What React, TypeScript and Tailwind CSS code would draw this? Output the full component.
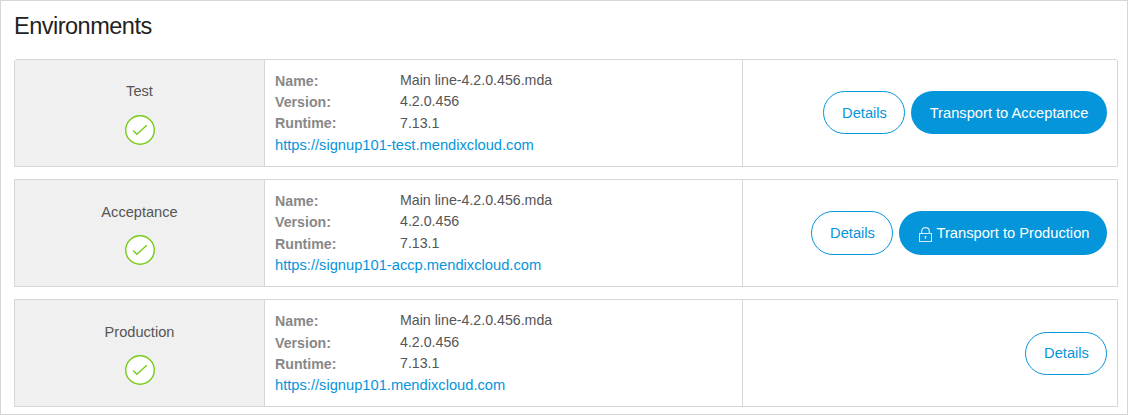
type Env = {
  name: string;
  url: string;
  labelClass: string;
  versionClass: string;
  versionValueClass: string;
  runtimeClass: string;
  actionsClass: string;
  buttonClass: string;
  cornerClass: string;
  transport?: string;
  transportClass?: string;
  locked?: boolean;
};

const environments: Env[] = [
  {
    name: 'Test',
    url: 'https://signup101-test.mendixcloud.com',
    labelClass: 'pt-[21px]',
    versionClass: '',
    versionValueClass: '-mt-px',
    runtimeClass: '',
    actionsClass: 'pt-[31px]',
    buttonClass: 'h-[43px] pt-0.5',
    cornerClass: 'rounded-t-[3px]',
    transport: 'Transport to Acceptance',
    transportClass: 'w-[196px]',
  },
  {
    name: 'Acceptance',
    url: 'https://signup101-accp.mendixcloud.com',
    labelClass: 'pt-[22px]',
    versionClass: '',
    versionValueClass: '-mt-px',
    runtimeClass: 'pt-px',
    actionsClass: 'pt-[31px]',
    buttonClass: 'h-[44px] pt-px',
    cornerClass: '',
    transport: 'Transport to Production',
    transportClass: 'w-[208px] pl-0.5',
    locked: true,
  },
  {
    name: 'Production',
    url: 'https://signup101.mendixcloud.com',
    labelClass: 'pt-[22px]',
    versionClass: 'pt-px',
    versionValueClass: '',
    runtimeClass: 'pt-px',
    actionsClass: 'pt-[32px]',
    buttonClass: 'h-[43px]',
    cornerClass: '',
  },
];

function CheckBadge() {
  return (
    <svg width="30" height="30" viewBox="0 0 30 30" fill="none">
      <circle cx="15" cy="15" r="14.3" fill="#fff" stroke="#76cb18" strokeWidth="1.4" />
      <path d="M8.2 15.6 L11.9 19.3 L21.8 10.2" stroke="#76cb18" strokeWidth="1.4" />
    </svg>
  );
}

function Lock() {
  return (
    <svg width="13" height="15" viewBox="0 0 13 15" fill="none" stroke="#d4ecfa">
      <path d="M0.5 6.5H12.5V14.5H0.5Z" strokeWidth="1.1" />
      <path d="M2.7 6.5V4.2C2.7 2 4.2 0.7 6.5 0.7S10.3 2 10.3 4.2V6.5" strokeWidth="1.2" />
      <path d="M6.5 9V12" strokeWidth="1.1" />
      <path d="M5.6 9.7H7.4" strokeWidth="1.4" />
    </svg>
  );
}

type FieldProps = { label: string; value: string; labelClass: string; valueClass?: string };

function Field({ label, value, labelClass, valueClass = '' }: FieldProps) {
  return (
    <div className="flex h-[21.5px] items-start">
      <span className={`w-[125px] font-bold text-[#888] ${labelClass}`}>{label}</span>
      <span className={`text-[#555] ${valueClass}`}>{value}</span>
    </div>
  );
}

function EnvironmentRow({ env }: { env: Env }) {
  return (
    <section className={`flex h-[108px] overflow-hidden border border-[#d7d7d7] ${env.cornerClass}`}>
      <div
        className={`flex w-[250px] shrink-0 flex-col items-center border-r border-[#d7d7d7] bg-[#f0f0f0] ${env.labelClass}`}
      >
        <span className="mb-auto text-[14.6px] leading-5 text-[#555]">{env.name}</span>
        <span className="mb-[21px]">
          <CheckBadge />
        </span>
      </div>
      <div className="w-[478px] shrink-0 border-r border-[#d7d7d7] pt-[10px] pl-[10px] text-[14.2px] leading-5">
        <Field label="Name:" value="Main line-4.2.0.456.mda" labelClass="pt-px" />
        <Field
          label="Version:"
          value="4.2.0.456"
          labelClass={env.versionClass}
          valueClass={env.versionValueClass}
        />
        <Field label="Runtime:" value="7.13.1" labelClass={env.runtimeClass} />
        <a href="#" className="block text-[14.7px] text-[#0595db]">
          {env.url}
        </a>
      </div>
      <div className={`flex flex-1 items-start justify-end gap-[6px] pr-[10px] text-[14.7px] ${env.actionsClass}`}>
        <button
          className={`flex w-[82px] items-center justify-center rounded-[22px] border border-[#0595db] bg-white pl-px text-[#0595db] ${env.buttonClass}`}
        >
          Details
        </button>
        {env.transport && (
          <button
            className={`flex items-center justify-center gap-[5px] rounded-[22px] bg-[#0595db] whitespace-nowrap text-white ${env.buttonClass} ${env.transportClass}`}
          >
            {env.locked && (
              <span className="pt-[2px]">
                <Lock />
              </span>
            )}
            {env.transport}
          </button>
        )}
      </div>
    </section>
  );
}

export default function App() {
  return (
    <main className="h-[415px] w-[1128px] border border-[#d7d7d7] bg-white px-[13px] font-['Liberation_Sans',Arial,sans-serif]">
      <h1 className="h-[58px] pt-[10px] text-[23.5px] leading-[30px] tracking-[-0.5px] text-[#222]">
        Environments
      </h1>
      <div className="flex w-[1104px] flex-col gap-3">
        {environments.map((env) => (
          <EnvironmentRow key={env.name} env={env} />
        ))}
      </div>
    </main>
  );
}
